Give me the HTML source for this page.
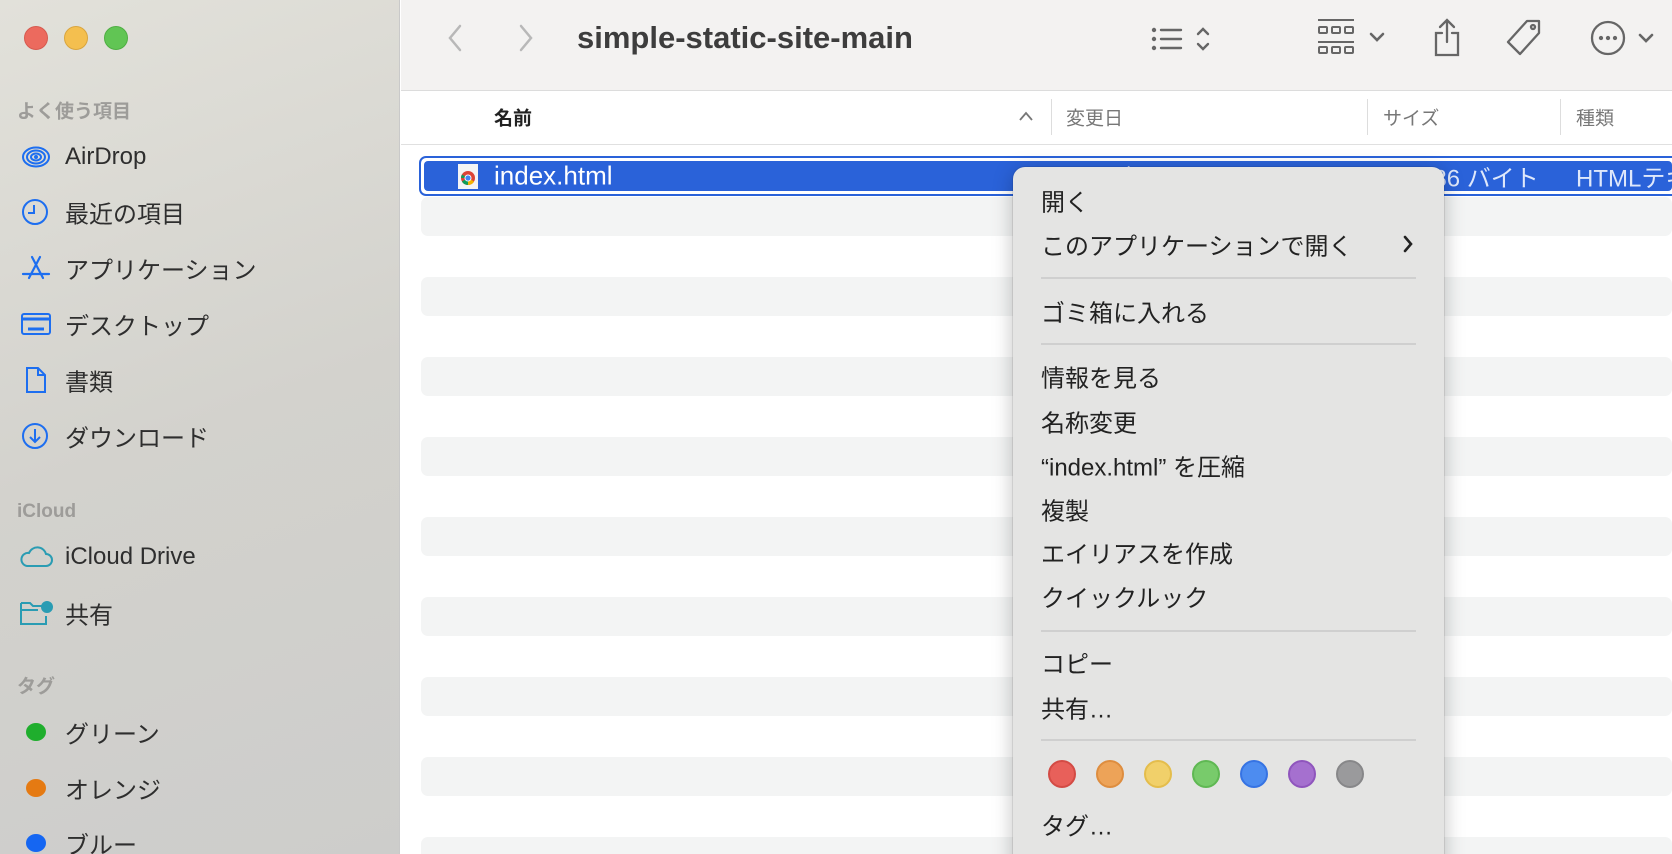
<!DOCTYPE html>
<html style="overflow:hidden;width:1672px;height:854px"><head><meta charset="utf-8"><style>
*{margin:0;padding:0;box-sizing:border-box}
body{width:1672px;height:854px;overflow:hidden;position:relative;font-family:"Liberation Sans","Noto Sans CJK JP",sans-serif;background:#fff}
#wrap{position:absolute;left:0;top:0;width:1672px;height:854px;overflow:hidden}
.abs{position:absolute}
#side{left:0;top:0;width:400px;height:854px;background:linear-gradient(160deg,#e2e1da 0%,#d3d2cd 50%,#cdcdcb 100%);border-right:1px solid #c9c9c9}
.tl{width:24px;height:24px;border-radius:50%;top:26px}
.sec{left:17px;font-size:19px;color:#9d9c99;font-weight:bold;transform:translateY(-50%)}
.it{left:65px;font-size:24px;color:#2e2e2e;transform:translateY(-50%);white-space:nowrap}
.ic{left:21px;transform:translateY(-50%)}
#tb{left:401px;top:0;right:0;height:91px;background:#f3f2f1;border-bottom:1px solid #dcdcdc}
.hd{font-size:19px;color:#777;transform:translateY(-50%);top:117px}
.dv{width:1px;height:36px;top:99px;background:#ddd}
.stripe{left:421px;right:0;height:39px;background:#f3f4f4;border-radius:7px}
#menu{left:1013px;top:167px;width:431px;height:720px;background:#e4e4e3;border-radius:12px;box-shadow:0 4px 20px rgba(0,0,0,.25),0 0 0 1px rgba(0,0,0,.08)}
.mi{left:28px;font-size:24px;color:#222;transform:translateY(-50%);white-space:nowrap}
.sep{left:28px;width:375px;height:2px;background:#cfcfcf}
.dot{width:28px;height:28px;border-radius:50%;top:593px}
</style></head><body><div id="wrap">
<div id="side" class="abs">
<div class="abs tl" style="left:24px;background:#ec6a5e;border:1px solid #d65a4f"></div>
<div class="abs tl" style="left:64px;background:#f4bf4f;border:1px solid #d9a53e"></div>
<div class="abs tl" style="left:104px;background:#61c554;border:1px solid #4fae43"></div>
<div class="abs sec" style="top:110px">よく使う項目</div>
<svg class="abs ic" style="top:157px" width="30" height="22" viewBox="0 0 30 22" fill="none" stroke="#1d6ef0" stroke-width="2"><ellipse cx="15" cy="11" rx="13" ry="9.5"/><ellipse cx="15" cy="11" rx="9" ry="6.5"/><ellipse cx="15" cy="11" rx="5" ry="3.5"/><circle cx="15" cy="11" r="1" fill="#1d6ef0"/></svg>
<div class="abs it" style="top:157px">AirDrop</div>
<svg class="abs ic" style="top:212px" width="28" height="28" viewBox="0 0 28 28" fill="none" stroke="#1d6ef0" stroke-width="2"><circle cx="14" cy="14" r="12"/><path d="M13 7v8H7"/></svg>
<div class="abs it" style="top:212px">最近の項目</div>
<svg class="abs ic" style="top:268px" width="30" height="26" viewBox="0 0 30 26" fill="none" stroke="#1d6ef0" stroke-width="2.2" stroke-linecap="round"><path d="M11 2l11 21M19 2L8 23M2 19h26"/></svg>
<div class="abs it" style="top:268px">アプリケーション</div>
<svg class="abs ic" style="top:324px" width="30" height="24" viewBox="0 0 30 24" fill="none" stroke="#1d6ef0" stroke-width="2"><rect x="1" y="2" width="28" height="20" rx="2"/><path d="M1 7h28M7 17h16" stroke-width="3"/></svg>
<div class="abs it" style="top:324px">デスクトップ</div>
<svg class="abs ic" style="top:380px;left:24px" width="24" height="28" viewBox="0 0 24 28" fill="none" stroke="#1d6ef0" stroke-width="2"><path d="M3 2h11l7 7v17H3z M14 2v7h7"/></svg>
<div class="abs it" style="top:380px">書類</div>
<svg class="abs ic" style="top:436px" width="28" height="28" viewBox="0 0 28 28" fill="none" stroke="#1d6ef0" stroke-width="2"><circle cx="14" cy="14" r="12"/><path d="M14 7v13M9 15l5 5 5-5"/></svg>
<div class="abs it" style="top:436px">ダウンロード</div>
<div class="abs sec" style="top:512px">iCloud</div>
<svg class="abs ic" style="top:557px;left:19px" width="34" height="22" viewBox="0 0 34 22" fill="none" stroke="#2a9cb3" stroke-width="2"><path d="M8 20h19a6 6 0 0 0 0-12 9 9 0 0 0-17-1A6.5 6.5 0 0 0 8 20z"/></svg>
<div class="abs it" style="top:557px">iCloud Drive</div>
<svg class="abs ic" style="top:613px;left:19px" width="34" height="26" viewBox="0 0 34 26" fill="none" stroke="#2a9cb3" stroke-width="2"><path d="M2 3h9l3 3h9M2 3v21h25v-8M2 10h17"/><circle cx="28" cy="7" r="5" fill="#2a9cb3"/></svg>
<div class="abs it" style="top:613px">共有</div>
<div class="abs sec" style="top:685px">タグ</div>
<div class="abs" style="left:26px;top:723px;width:20px;height:18px;border-radius:50%;background:#1fae2d"></div>
<div class="abs it" style="top:732px">グリーン</div>
<div class="abs" style="left:26px;top:779px;width:20px;height:18px;border-radius:50%;background:#e57a12"></div>
<div class="abs it" style="top:788px">オレンジ</div>
<div class="abs" style="left:26px;top:834px;width:20px;height:18px;border-radius:50%;background:#1566f2"></div>
<div class="abs it" style="top:843px">ブルー</div>
</div>

<div id="tb" class="abs"></div>
<svg class="abs" style="left:445px;top:24px" width="20" height="28" viewBox="0 0 20 28" fill="none" stroke="#b8b8b8" stroke-width="2.5" stroke-linecap="round"><path d="M15 2L5 14l10 12"/></svg>
<svg class="abs" style="left:516px;top:24px" width="20" height="28" viewBox="0 0 20 28" fill="none" stroke="#b8b8b8" stroke-width="2.5" stroke-linecap="round"><path d="M5 2l10 12L5 26"/></svg>
<div class="abs" style="left:577px;top:38px;transform:translateY(-50%);font-size:31px;font-weight:bold;color:#3d3d3d">simple-static-site-main</div>
<svg class="abs" style="left:1151px;top:26px" width="72" height="26" viewBox="0 0 72 26" fill="none" stroke="#666" stroke-width="2.4" stroke-linecap="round"><circle cx="3" cy="4" r="1" fill="#666"/><circle cx="3" cy="13" r="1" fill="#666"/><circle cx="3" cy="22" r="1" fill="#666"/><path d="M10 4h20M10 13h20M10 22h20M47 8l5-5 5 5M47 18l5 5 5-5"/></svg>
<svg class="abs" style="left:1317px;top:18px" width="72" height="38" viewBox="0 0 72 38" fill="none" stroke="#666" stroke-width="2"><path d="M1 2h36M1 24h36"/><rect x="2" y="9" width="8" height="6" rx="1"/><rect x="15" y="9" width="8" height="6" rx="1"/><rect x="28" y="9" width="8" height="6" rx="1"/><rect x="2" y="29" width="8" height="6" rx="1"/><rect x="15" y="29" width="8" height="6" rx="1"/><rect x="28" y="29" width="8" height="6" rx="1"/><path d="M54 16l6 6 6-6" stroke-width="2.6" stroke-linecap="round"/></svg>
<svg class="abs" style="left:1431px;top:18px" width="32" height="40" viewBox="0 0 32 40" fill="none" stroke="#666" stroke-width="2.3" stroke-linecap="round"><path d="M16 2v22M9 9l7-7 7 7M11 15H5v22h22V15h-6"/></svg>
<svg class="abs" style="left:1505px;top:18px" width="40" height="40" viewBox="0 0 40 40" fill="none" stroke="#666" stroke-width="2.3" stroke-linejoin="round"><path d="M22 3h12v12L15 36 3 24z"/><circle cx="28" cy="9" r="2"/></svg>
<svg class="abs" style="left:1590px;top:20px" width="72" height="36" viewBox="0 0 72 36" fill="none" stroke="#666" stroke-width="2.3" stroke-linecap="round"><circle cx="18" cy="18" r="16"/><circle cx="11" cy="18" r="1" fill="#666"/><circle cx="18" cy="18" r="1" fill="#666"/><circle cx="25" cy="18" r="1" fill="#666"/><path d="M50 15l6 6 6-6" stroke-width="2.6"/></svg>

<div class="abs hd" style="left:494px;color:#222;font-weight:bold">名前</div>
<svg class="abs" style="left:1018px;top:111px" width="16" height="10" viewBox="0 0 16 10" fill="none" stroke="#777" stroke-width="1.8"><path d="M2 9l6-7 6 7"/></svg>
<div class="abs dv" style="left:1051px"></div>
<div class="abs hd" style="left:1066px">変更日</div>
<div class="abs dv" style="left:1367px"></div>
<div class="abs hd" style="left:1383px">サイズ</div>
<div class="abs dv" style="left:1560px"></div>
<div class="abs hd" style="left:1576px">種類</div>
<div class="abs" style="left:401px;right:0;top:144px;height:1px;background:#e0e0e0"></div>

<div class="abs stripe" style="top:197px"></div>
<div class="abs stripe" style="top:277px"></div>
<div class="abs stripe" style="top:357px"></div>
<div class="abs stripe" style="top:437px"></div>
<div class="abs stripe" style="top:517px"></div>
<div class="abs stripe" style="top:597px"></div>
<div class="abs stripe" style="top:677px"></div>
<div class="abs stripe" style="top:757px"></div>
<div class="abs stripe" style="top:837px"></div>

<div class="abs" style="left:419px;right:-10px;top:156px;height:40px;border:2px solid #2a62d9;border-radius:7px;background:#fff"></div>
<div class="abs" style="left:424px;right:0;top:161px;height:30px;background:#2a62d9;border-radius:4px"></div>
<div class="abs" style="left:458px;top:164px;width:20px;height:25px;background:#f4f4f4"></div>
<svg class="abs" style="left:460px;top:170px" width="16" height="16" viewBox="0 0 16 16"><circle cx="8" cy="8" r="7" fill="#db4437"/><path d="M8 8L1.9 11.5A7 7 0 0 0 8 15z" fill="#0f9d58"/><path d="M8 8l6.1 3.5A7 7 0 0 1 8 15z" fill="#f4b400"/><path d="M8 8L1 8A7 7 0 0 1 1.9 4.5z" fill="#0f9d58"/><circle cx="8" cy="8" r="3.5" fill="#fff"/><circle cx="8" cy="8" r="2.6" fill="#4285f4"/></svg>
<div class="abs" style="left:494px;top:176px;transform:translateY(-50%);font-size:26px;color:#fff">index.html</div>
<div class="abs" style="left:1068px;top:176px;transform:translateY(-50%);font-size:24px;color:#dfe8fb;white-space:nowrap">2025年7月26日 15:41</div>
<div class="abs" style="left:1420px;top:176px;transform:translateY(-50%);font-size:24px;color:#dfe8fb;white-space:nowrap">386 バイト</div>
<div class="abs" style="left:1576px;top:176px;transform:translateY(-50%);font-size:24px;color:#dfe8fb;white-space:nowrap">HTMLテキスト</div>

<div id="menu" class="abs">
<div class="abs mi" style="top:33px">開く</div>
<div class="abs mi" style="top:77px">このアプリケーションで開く</div>
<svg class="abs" style="left:389px;top:68px" width="12" height="18" viewBox="0 0 12 18" fill="none" stroke="#222" stroke-width="2.6" stroke-linecap="round"><path d="M3 2l6 7-6 7"/></svg>
<div class="abs sep" style="top:110px"></div>
<div class="abs mi" style="top:144px">ゴミ箱に入れる</div>
<div class="abs sep" style="top:176px"></div>
<div class="abs mi" style="top:209px">情報を見る</div>
<div class="abs mi" style="top:254px">名称変更</div>
<div class="abs mi" style="top:298px">“index.html” を圧縮</div>
<div class="abs mi" style="top:342px">複製</div>
<div class="abs mi" style="top:385px">エイリアスを作成</div>
<div class="abs mi" style="top:429px">クイックルック</div>
<div class="abs sep" style="top:463px"></div>
<div class="abs mi" style="top:495px">コピー</div>
<div class="abs mi" style="top:540px">共有…</div>
<div class="abs sep" style="top:572px"></div>
<div class="abs dot" style="left:35px;background:#e8605a;border:2px solid #d34b45"></div>
<div class="abs dot" style="left:83px;background:#eda358;border:2px solid #de8d3f"></div>
<div class="abs dot" style="left:131px;background:#f1d06a;border:2px solid #e4bd4c"></div>
<div class="abs dot" style="left:179px;background:#78cb6b;border:2px solid #5fb853"></div>
<div class="abs dot" style="left:227px;background:#4d8cf0;border:2px solid #3673e3"></div>
<div class="abs dot" style="left:275px;background:#a570cf;border:2px solid #8f55bd"></div>
<div class="abs dot" style="left:323px;background:#9a9a9c;border:2px solid #878789"></div>
<div class="abs mi" style="top:657px">タグ…</div>
</div>
</div></body></html>
